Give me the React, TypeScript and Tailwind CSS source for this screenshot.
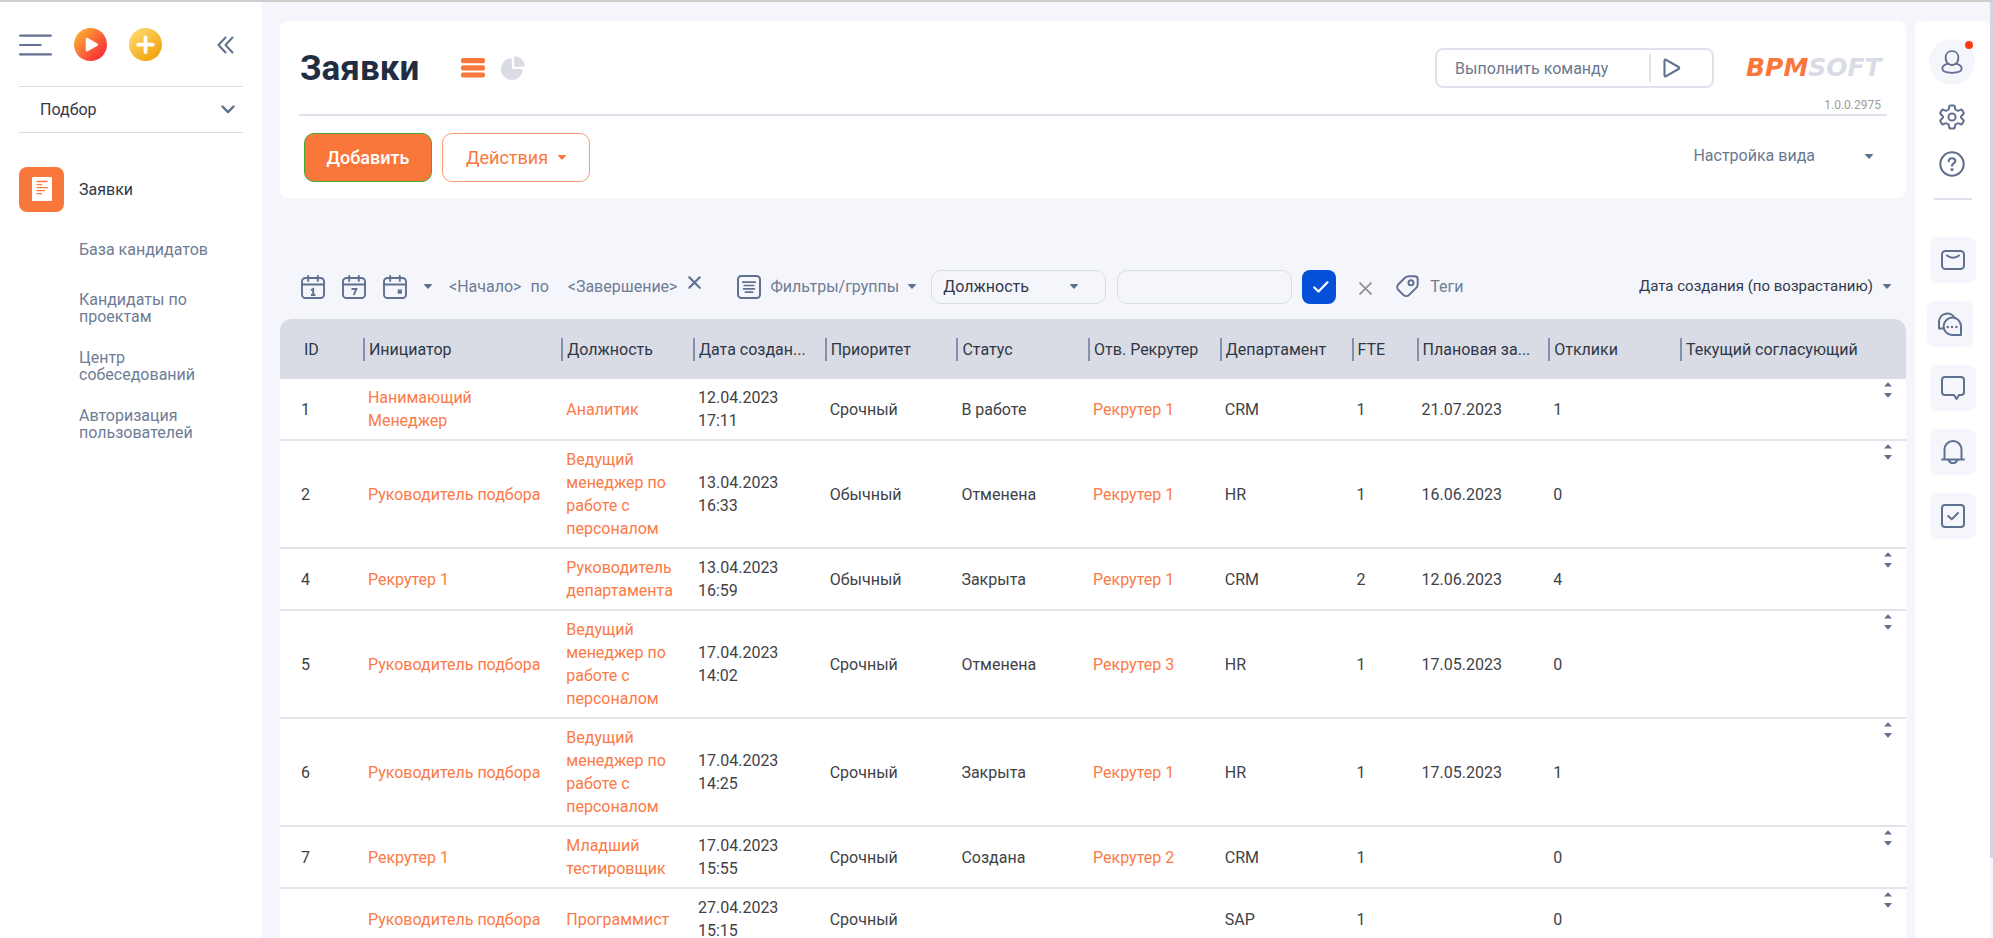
import type { ReactNode } from "react";

type Row = {
  id: string;
  initiator: string;
  position: string;
  created: string;
  priority: string;
  status: string;
  recruiter: string;
  department: string;
  fte: string;
  planned: string;
  responses: string;
};

const columns = [
  { title: "ID", width: "w-[5.1%]" },
  { title: "Инициатор", width: "w-[12.2%]" },
  { title: "Должность", width: "w-[8.1%]" },
  { title: "Дата создан...", width: "w-[8.1%]" },
  { title: "Приоритет", width: "w-[8.1%]" },
  { title: "Статус", width: "w-[8.1%]" },
  { title: "Отв. Рекрутер", width: "w-[8.1%]" },
  { title: "Департамент", width: "w-[8.1%]" },
  { title: "FTE", width: "w-[4%]" },
  { title: "Плановая за...", width: "w-[8.1%]" },
  { title: "Отклики", width: "w-[8.1%]" },
  { title: "Текущий согласующий", width: "w-auto" },
];

const lead = "Ведущий менеджер по работе с персоналом";
const head = "Руководитель подбора";

const rows: Row[] = [
  { id: "1", initiator: "Нанимающий Менеджер", position: "Аналитик", created: "12.04.2023 17:11", priority: "Срочный", status: "В работе", recruiter: "Рекрутер 1", department: "CRM", fte: "1", planned: "21.07.2023", responses: "1" },
  { id: "2", initiator: head, position: lead, created: "13.04.2023 16:33", priority: "Обычный", status: "Отменена", recruiter: "Рекрутер 1", department: "HR", fte: "1", planned: "16.06.2023", responses: "0" },
  { id: "4", initiator: "Рекрутер 1", position: "Руководитель департамента", created: "13.04.2023 16:59", priority: "Обычный", status: "Закрыта", recruiter: "Рекрутер 1", department: "CRM", fte: "2", planned: "12.06.2023", responses: "4" },
  { id: "5", initiator: head, position: lead, created: "17.04.2023 14:02", priority: "Срочный", status: "Отменена", recruiter: "Рекрутер 3", department: "HR", fte: "1", planned: "17.05.2023", responses: "0" },
  { id: "6", initiator: head, position: lead, created: "17.04.2023 14:25", priority: "Срочный", status: "Закрыта", recruiter: "Рекрутер 1", department: "HR", fte: "1", planned: "17.05.2023", responses: "1" },
  { id: "7", initiator: "Рекрутер 1", position: "Младший тестировщик", created: "17.04.2023 15:55", priority: "Срочный", status: "Создана", recruiter: "Рекрутер 2", department: "CRM", fte: "1", planned: "", responses: "0" },
  { id: "", initiator: head, position: "Программист", created: "27.04.2023 15:15", priority: "Срочный", status: "", recruiter: "", department: "SAP", fte: "1", planned: "", responses: "0" },
];

function Caret({ className = "" }: { className?: string }) {
  return (
    <svg className={`h-[5px] w-2 shrink-0 ${className}`} viewBox="0 0 8 5" fill="currentColor" aria-hidden="true">
      <path d="M0.6 0h6.8c.5 0 .7.6.4.9L4.5 4.5a.7.7 0 0 1-1 0L.2.9C-.1.600.1 0 .6 0z" />
    </svg>
  );
}

function Calendar({ children }: { children: ReactNode }) {
  return (
    <svg className="size-6" viewBox="0 0 24 24" fill="none" stroke="currentColor" strokeWidth="1.900" strokeLinecap="round" aria-hidden="true">
      <rect x="1" y="3" width="22" height="20" rx="3.500" />
      <path d="M1 9.500h22M7.200.9v5M16.800.9v5" />
      {children}
    </svg>
  );
}

function Sidebar() {
  return (
    <aside className="w-[262px] shrink-0 bg-white px-[19px] pt-[26px]">
      <div className="flex h-[33px] items-center">
        <button type="button" aria-label="Меню" className="text-[#60708f]">
          <svg className="h-[22px] w-[33px]" viewBox="0 0 33 22" fill="none" stroke="currentColor" strokeWidth="2.200" strokeLinecap="round">
            <path d="M1.100 1.600h30.800M1.100 11h20.500M1.100 20.400h30.800" />
          </svg>
        </button>
        <button type="button" aria-label="Запустить" className="ml-[22px]">
          <svg className="size-[33px]" viewBox="0 0 33 33">
            <defs>
              <linearGradient id="runFill" x1="0.100" y1="0.150" x2="0.850" y2="0.850">
                <stop offset="0" stopColor="#fbab34" />
                <stop offset="1" stopColor="#fa2f38" />
              </linearGradient>
            </defs>
            <circle cx="16.500" cy="16.500" r="16.500" fill="url(#runFill)" />
            <path d="M13 11.200v11l9.700-5.500z" fill="#fff" stroke="#fff" strokeWidth="2.600" strokeLinejoin="round" />
          </svg>
        </button>
        <button type="button" aria-label="Создать" className="ml-[22px]">
          <svg className="size-[33px]" viewBox="0 0 33 33">
            <defs>
              <linearGradient id="addFill" x1="0.150" y1="0.100" x2="0.800" y2="0.900">
                <stop offset="0" stopColor="#fdd76c" />
                <stop offset="1" stopColor="#f1a40d" />
              </linearGradient>
            </defs>
            <circle cx="16.500" cy="16.500" r="16.500" fill="url(#addFill)" />
            <path d="M16.500 9.500v14.500M9.200 16.700h14.600" stroke="#fff" strokeWidth="3.800" strokeLinecap="round" />
          </svg>
        </button>
        <button type="button" aria-label="Свернуть" className="mr-[9px] ml-auto text-[#60708f]">
          <svg className="h-[18px] w-[17px]" viewBox="0 0 17 18" fill="none" stroke="currentColor" strokeWidth="2" strokeLinecap="round" strokeLinejoin="round">
            <path d="M8.500 1.500L1.500 9l7 7.500M15.500 1.500L8.500 9l7 7.500" />
          </svg>
        </button>
      </div>

      <div className="mt-[25px] grid h-[47px] items-center border-y border-[#d9dce6]">
        <select aria-label="Рабочее место" className="col-start-1 row-start-1 h-full appearance-none bg-transparent px-[21px] text-base text-[#31394a]">
          <option>Подбор</option>
        </select>
        <svg className="pointer-events-none col-start-1 row-start-1 mr-2 h-[9px] w-[14px] justify-self-end text-[#60708f]" viewBox="0 0 14 9" fill="none" stroke="currentColor" strokeWidth="2.400" strokeLinecap="round" strokeLinejoin="round">
          <path d="M1.500 1.500L7 7.200l5.500-5.700" />
        </svg>
      </div>

      <nav className="mt-[33px] text-base leading-[17px] text-[#6f7c95]">
        <a href="#requests" className="flex h-[46px] items-center gap-[15px] text-[#31394a]">
          <span className="flex size-[45px] items-center justify-center rounded-lg bg-[#fa773c]">
            <svg className="h-6 w-5" viewBox="0 0 20 24" fill="none" stroke="#fa773c" strokeWidth="1.300" strokeLinecap="round">
              <rect width="20" height="24" rx="0.800" fill="#fff" stroke="none" />
              <path d="M5 4.500h10M5 7.600h4.500M5 10.600h10.500M5 13.700h7.500M5 16.700h4.500" />
            </svg>
          </span>
          Заявки
        </a>
        <ul className="ml-[60px] flex w-32 flex-col pt-[29px]">
          <li className="pb-[33px]"><a href="#candidates" className="whitespace-nowrap">База кандидатов</a></li>
          <li className="pb-6"><a href="#projects">Кандидаты по проектам</a></li>
          <li className="pb-6"><a href="#interviews">Центр собеседований</a></li>
          <li><a href="#auth">Авторизация пользователей</a></li>
        </ul>
      </nav>
    </aside>
  );
}

function PageHeader() {
  return (
    <header className="rounded-lg bg-white px-[19px] pb-4">
      <div className="flex h-[95px] items-start border-b-2 border-[#e0e2eb]">
        <h1 className="mt-7 w-[162px] pl-px text-[35px] leading-10 font-bold text-[#232d42]">Заявки</h1>
        <button type="button" aria-label="Список" className="mt-[37px] text-[#fa773c]">
          <svg className="h-5 w-6" viewBox="0 0 24 20" fill="currentColor">
            <rect width="24" height="5.200" rx="2" />
            <rect y="7.200" width="24" height="5.200" rx="2" />
            <rect y="14.400" width="24" height="5.200" rx="2" />
          </svg>
        </button>
        <button type="button" aria-label="Аналитика" className="mt-[35px] ml-4 text-[#d9dce5]">
          <svg className="size-6" viewBox="0 0 24 24" fill="currentColor">
            <path d="M10.800 2.200v9.300a1.600 1.600 0 0 0 1.600 1.600h9.300A10.900 10.900 0 1 1 10.800 2.200z" />
            <path d="M13.200 1.500c0-.8.600-1.400 1.400-1.300 4.800.5 8.500 4.200 9.200 9 .1.800-.500 1.500-1.300 1.500h-8c-.7 0-1.300-.6-1.300-1.300z" />
          </svg>
        </button>
        <form className="mt-[27px] ml-auto flex h-10 w-[279px] items-center rounded-lg border-2 border-[#e0e2eb]">
          <input aria-label="Команда" placeholder="Выполнить команду" className="h-full min-w-0 flex-1 pl-[18px] text-base outline-none placeholder:text-[#6b7890]" />
          <span className="h-7 w-0.5 bg-[#e0e2eb]" />
          <button type="button" aria-label="Выполнить" className="flex w-[61px] pl-3 text-[#60708f]">
            <svg className="h-5 w-[18px]" viewBox="0 0 18 20" fill="none" stroke="currentColor" strokeWidth="2.100" strokeLinejoin="round">
              <path d="M1.500 2.700v14.600c0 .9.900 1.400 1.600.9l12.500-7.200c.8-.5.800-1.500 0-2L3.100 1.800c-.7-.5-1.600 0-1.600.9z" />
            </svg>
          </button>
        </form>
        <div className="mt-[34px] ml-8 w-[141px] shrink-0">
          <div className="font-['DejaVu_Sans',sans-serif] text-[25px] leading-[25px] font-bold whitespace-nowrap text-[#d9dce5] italic">
            <span className="text-[#fa773c]">BPM</span>SOFT
          </div>
          <div className="mt-[17px] mr-1.5 text-right text-xs leading-4 text-[#9b9b9b]">1.0.0.2975</div>
        </div>
      </div>
      <div className="flex items-start pt-[17px] pl-[5px]">
        <button type="button" className="h-[49px] w-32 rounded-[10px] border border-[#43ab2e] bg-[#fa773c] text-lg font-medium text-white">Добавить</button>
        <button type="button" className="ml-2.5 flex h-[49px] w-[148px] items-center justify-center gap-2.5 rounded-[10px] border border-[#fa9a70] text-lg text-[#fa773c]">
          Действия
          <Caret />
        </button>
        <button type="button" className="mt-[11px] mr-3.5 ml-auto flex items-center gap-[50px] text-base leading-6 text-[#6b7890]">
          Настройка вида
          <Caret className="text-[#60708f]" />
        </button>
      </div>
    </header>
  );
}

function FilterBar() {
  return (
    <div className="mt-[71px] flex h-[35px] items-center text-base whitespace-nowrap text-[#6f7c95]">
      <button type="button" aria-label="Сегодня" className="ml-[21px] text-[#60708f]">
        <Calendar>
          <path d="M10 15.200l2.200-1.200v6M10 20h4.400" strokeLinecap="butt" />
        </Calendar>
      </button>
      <button type="button" aria-label="Неделя" className="ml-[17px] text-[#60708f]">
        <Calendar>
          <path d="M9.500 14h4.800l-2.500 6" strokeLinecap="butt" />
        </Calendar>
      </button>
      <button type="button" aria-label="Месяц" className="ml-[17px] text-[#60708f]">
        <Calendar>
          <rect x="14.700" y="14.500" width="4.200" height="4.200" fill="currentColor" stroke="none" />
        </Calendar>
      </button>
      <button type="button" aria-label="Период" className="ml-[17px] text-[#60708f]"><Caret /></button>
      <button type="button" className="ml-[17px]">&lt;Начало&gt;</button>
      <span className="ml-[9px]">по</span>
      <button type="button" className="ml-[19px]">&lt;Завершение&gt;</button>
      <button type="button" aria-label="Сбросить период" className="mb-2 ml-[11px] text-[#60708f]">
        <svg className="size-[13px]" viewBox="0 0 13 13" stroke="currentColor" strokeWidth="2.200" strokeLinecap="round">
          <path d="M1.300 1.300l10.400 10.400M11.700 1.300L1.300 11.700" />
        </svg>
      </button>
      <button type="button" className="ml-9 flex items-center gap-[9px]">
        <svg className="size-6 text-[#60708f]" viewBox="0 0 24 24" fill="none" stroke="currentColor" strokeWidth="2" strokeLinecap="round">
          <rect x="1" y="1" width="22" height="22" rx="3.500" />
          <path d="M5.800 7.200h12.400M7.300 10.500h9.400M6.500 13.800h11M8.300 17.100h7.400" strokeWidth="1.700" />
        </svg>
        Фильтры/группы
        <Caret className="text-[#60708f]" />
      </button>
      <div className="ml-[15px] grid h-[34px] w-[175px] items-center">
        <select aria-label="Поле фильтра" className="col-start-1 row-start-1 h-full appearance-none rounded-[10px] border border-[#d9dce5] bg-transparent px-[11px] text-[#31394a]">
          <option>Должность</option>
        </select>
        <Caret className="pointer-events-none col-start-1 row-start-1 mr-7 justify-self-end text-[#60708f]" />
      </div>
      <input aria-label="Значение фильтра" className="ml-[11px] h-[34px] w-[175px] rounded-[10px] border border-[#d9dce5] bg-transparent px-3" />
      <button type="button" aria-label="Применить" className="ml-2.5 flex size-[34px] items-center justify-center rounded-lg bg-[#0450d8]">
        <svg className="ml-1 h-3 w-4" viewBox="0 0 16 12" fill="none" stroke="#fff" strokeWidth="2.200" strokeLinecap="round" strokeLinejoin="round">
          <path d="M1.300 6.500l4.200 4L14.500 1.300" />
        </svg>
      </button>
      <button type="button" aria-label="Отменить" className="mt-1 ml-[23px] text-[#8e8f92]">
        <svg className="size-[13px]" viewBox="0 0 13 13" stroke="currentColor" strokeWidth="1.700">
          <path d="M.5.500l12 12M12.500.5l-12 12" />
        </svg>
      </button>
      <button type="button" className="ml-6 flex items-center gap-[11px]">
        <svg className="size-[23px] text-[#60708f]" viewBox="0 0 23 23" fill="none" stroke="currentColor" strokeWidth="2" strokeLinejoin="round">
          <path d="M13.500 1.200h5.200a3 3 0 0 1 3 3v5.200a5 5 0 0 1-1.500 3.500l-7 7a4.200 4.200 0 0 1-5.900 0L2.400 15a4.200 4.200 0 0 1 0-5.800l6.500-6.500a6.500 6.500 0 0 1 4.600-1.500z" />
          <circle cx="15" cy="7.800" r="2.500" />
        </svg>
        Теги
      </button>
      <button type="button" className="mr-[15px] ml-auto flex items-center gap-2.5 text-[15px] text-[#31394a]">
        Дата создания (по возрастанию)
        <Caret className="text-[#60708f]" />
      </button>
    </div>
  );
}

function RequestsTable() {
  return (
    <table className="mt-[15px] w-full table-fixed text-left text-base leading-[23px] text-[#414247]">
      <thead>
        <tr className="h-[60px] text-[#2f3747]">
          {columns.map((c, i) => (
            <th key={c.title} className={`${c.width} bg-[#d9dce4] p-0 font-normal whitespace-nowrap first:rounded-tl-xl last:rounded-tr-xl`}>
              <div className={i === 0 ? "pl-6" : "border-l-2 border-[#8490ab] pl-1"}>{c.title}</div>
            </th>
          ))}
        </tr>
      </thead>
      <tbody className="bg-white">
        {rows.map((r) => (
          <tr key={r.id + r.created} className="border-b-2 border-[#e2e4eb] [&>td]:py-[7px] [&>td]:pr-3 [&>td]:pl-[5px]">
            <td><span className="ml-4">{r.id}</span></td>
            <td><a href="#initiator" className="text-[#fb7a47]">{r.initiator}</a></td>
            <td><a href="#position" className="text-[#fb7a47]">{r.position}</a></td>
            <td>{r.created}</td>
            <td>{r.priority}</td>
            <td>{r.status}</td>
            <td><a href="#recruiter" className="text-[#fb7a47]">{r.recruiter}</a></td>
            <td>{r.department}</td>
            <td>{r.fte}</td>
            <td>{r.planned}</td>
            <td>{r.responses}</td>
            <td className="align-top">
              <button type="button" aria-label="Развернуть" className="-mt-1 mr-0.5 ml-auto block text-[#60708f]">
                <svg className="h-4 w-2" viewBox="0 0 8 16" fill="currentColor">
                  <path d="M4 0.300l4 4.200H0zM4 15.700l4-4.700H0z" />
                </svg>
              </button>
            </td>
          </tr>
        ))}
      </tbody>
    </table>
  );
}

function Tile({ label, shift, children }: { label: string; shift?: boolean; children: ReactNode }) {
  return (
    <button type="button" aria-label={label} className={`flex size-[46px] items-center justify-center rounded-lg bg-[#f5f6fb] ${shift ? "mr-1.5" : ""}`}>
      <svg className="size-6" viewBox="0 0 24 24" fill="none" stroke="currentColor" strokeWidth="2" strokeLinecap="round" strokeLinejoin="round">
        {children}
      </svg>
    </button>
  );
}

function RightRail() {
  return (
    <aside className="mt-[19px] flex w-[75px] shrink-0 flex-col items-center rounded-t-lg bg-white text-[#60708f]">
      <button type="button" aria-label="Профиль" className="relative mt-[18px] mr-px flex size-[46px] items-center justify-center rounded-full bg-[#f5f6fb]">
        <svg className="h-6 w-[22px]" viewBox="0 0 22 24" fill="none" stroke="currentColor" strokeWidth="1.800">
          <path d="M11 1.200c4 0 6.400 2.800 6.400 6.300 0 2.600-1 5-2.700 6.300-2 1.600-5.400 1.600-7.400 0C5.600 12.500 4.600 10.100 4.600 7.500c0-3.500 2.400-6.300 6.400-6.300z" />
          <path d="M7 13.700c-3.500.9-5.700 2.500-5.700 4.900 0 3 3.300 4.200 9.700 4.200s9.700-1.200 9.700-4.200c0-2.400-2.200-4-5.700-4.900" />
        </svg>
        <span className="absolute top-0.5 right-0.5 size-2 rounded-full bg-[#fd3a12]" />
      </button>
      <button type="button" aria-label="Настройки" className="mt-[19px] mr-px">
        <svg className="size-[26px]" viewBox="0 0 26 26" fill="none" stroke="currentColor" strokeWidth="2" strokeLinejoin="round">
          <path d="M11.200 1.500h3.600c.5 0 .8.300.9.800l.5 2.600c.1.500.5.900 1 1.100l.9.500c.5.300 1 .3 1.500.1l2.300-.9c.5-.2.900 0 1.200.4l1.500 2.600c.3.500.2 1-.2 1.300l-1.800 1.700a1.700 1.700 0 0 0 0 2.600l1.800 1.700c.4.300.5.800.2 1.300l-1.500 2.600c-.3.400-.7.600-1.200.4l-2.300-.9c-.5-.2-1-.2-1.500.1l-.9.500c-.5.200-.9.600-1 1.100l-.5 2.600c-.1.500-.4.800-.9.800h-3.600c-.5 0-.8-.3-.9-.8l-.5-2.600c-.1-.5-.5-.9-1-1.100l-.9-.5c-.5-.3-1-.3-1.500-.1l-2.300.9c-.5.200-.9 0-1.200-.4l-1.500-2.600c-.3-.5-.2-1 .2-1.300l1.800-1.700a1.700 1.700 0 0 0 0-2.600l-1.800-1.700c-.4-.3-.5-.8-.2-1.300l1.500-2.600c.3-.4.700-.6 1.200-.4l2.300.9c.5.200 1 .2 1.500-.1l.9-.5c.5-.2.900-.6 1-1.100l.5-2.600c.1-.5.400-.8.900-.8z" />
          <circle cx="13" cy="13" r="3.600" />
        </svg>
      </button>
      <button type="button" aria-label="Справка" className="mt-[21px] mr-px">
        <svg className="size-[26px]" viewBox="0 0 26 26" fill="none" stroke="currentColor" strokeWidth="2.100" strokeLinecap="round" strokeLinejoin="round">
          <circle cx="13" cy="13" r="11.700" />
          <path d="M9.700 10.200C9.800 8.300 11.200 7.300 13 7.300c1.900 0 3.300 1.100 3.300 2.800 0 2.300-3.300 2.300-3.300 4.700" />
          <circle cx="13" cy="18.600" r="0.600" />
        </svg>
      </button>
      <span className="mt-[21px] h-0.5 w-[38px] bg-[#e0e2eb]" />
      <div className="mt-[37px] flex flex-col items-center gap-[18px]">
        <Tile label="Почта">
          <rect x="1" y="3" width="22" height="18" rx="3.500" />
          <path d="M6 7.500c3.500 3 8.500 3 12 0" />
        </Tile>
        <Tile label="Чаты" shift>
          <path d="M4.500 16.500H1V9.300a8.300 8.300 0 0 1 15.800-3" />
          <path d="M23 23h-9.200A8.700 8.700 0 1 1 23 14.500z" fill="#f5f6fb" />
          <path d="M9.700 15h.1M14 15h.1M18.300 15h.1" strokeWidth="2.400" />
        </Tile>
        <Tile label="Лента">
          <path d="M4 1h16a3 3 0 0 1 3 3v12a3 3 0 0 1-3 3h-2l-2.500 4-2.500-4H4a3 3 0 0 1-3-3V4a3 3 0 0 1 3-3z" />
        </Tile>
        <Tile label="Уведомления">
          <path d="M3.500 19.500V9.500a8.500 8.500 0 0 1 17 0v10M1 19.500h22M7.500 20c1 2.200 2.700 3.200 4.500 3.200s3.500-1 4.500-3.200" />
        </Tile>
        <Tile label="Задачи">
          <rect x="1" y="1" width="22" height="22" rx="3" />
          <path d="M7.200 12l3.500 3.200 6.300-6.200" />
        </Tile>
      </div>
    </aside>
  );
}

export default function App() {
  return (
    <div className="flex h-screen flex-col overflow-hidden border-t-2 border-[#cdcfcd] bg-[#f5f6fb] font-[Roboto,'Noto_Sans',sans-serif]">
      <div className="flex min-h-0 flex-1">
        <Sidebar />
        <main className="ml-[18px] min-w-0 flex-1 pt-[19px]">
          <PageHeader />
          <FilterBar />
          <RequestsTable />
        </main>
        <div className="w-[9px] shrink-0" />
        <RightRail />
        <div className="w-[3px] shrink-0">
          <div className="h-[91.4%] rounded-b-sm bg-[#d3d6e0]" />
        </div>
      </div>
    </div>
  );
}
